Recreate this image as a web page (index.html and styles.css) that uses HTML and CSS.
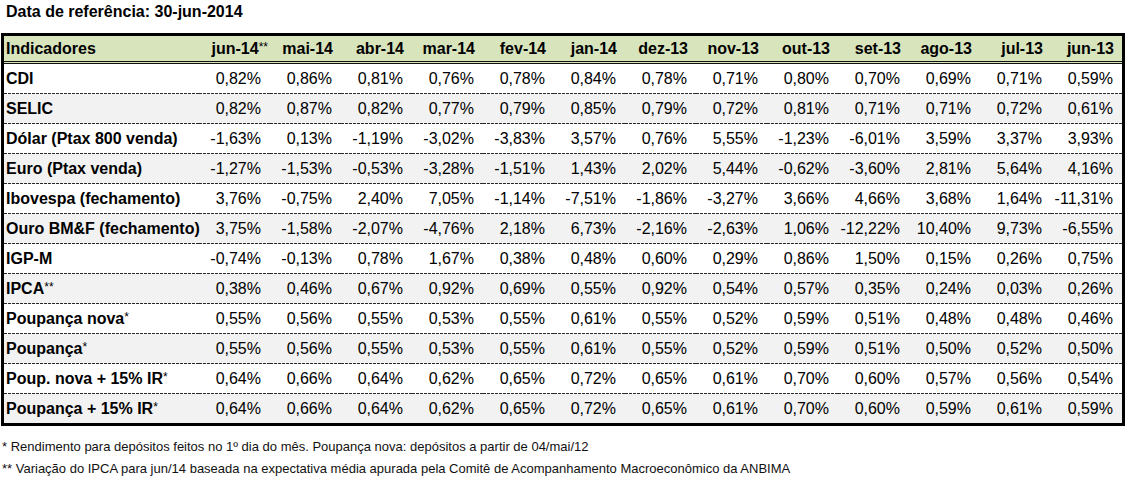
FILE: index.html
```html
<!DOCTYPE html>
<html lang="pt-BR">
<head>
<meta charset="utf-8">
<title>Indicadores</title>
<link rel="stylesheet" href="styles.css">
</head>
<body>
<h1 class="title">Data de referência: 30-jun-2014</h1>
<table class="ind">
  <colgroup>
    <col class="c-label">
    <col class="c-val"><col class="c-val"><col class="c-val"><col class="c-val"><col class="c-val"><col class="c-val"><col class="c-val"><col class="c-val"><col class="c-val"><col class="c-val"><col class="c-val"><col class="c-val"><col class="c-val">
  </colgroup>
  <thead>
    <tr>
      <th class="lbl">Indicadores</th>
      <th>jun-14<span class="ast hang">**</span></th>
      <th>mai-14</th><th>abr-14</th><th>mar-14</th><th>fev-14</th><th>jan-14</th><th>dez-13</th><th>nov-13</th><th>out-13</th><th>set-13</th><th>ago-13</th><th>jul-13</th><th>jun-13</th>
    </tr>
  </thead>
  <tbody>
    <tr><td class="lbl">CDI</td><td>0,82%</td><td>0,86%</td><td>0,81%</td><td>0,76%</td><td>0,78%</td><td>0,84%</td><td>0,78%</td><td>0,71%</td><td>0,80%</td><td>0,70%</td><td>0,69%</td><td>0,71%</td><td>0,59%</td></tr>
    <tr class="alt"><td class="lbl">SELIC</td><td>0,82%</td><td>0,87%</td><td>0,82%</td><td>0,77%</td><td>0,79%</td><td>0,85%</td><td>0,79%</td><td>0,72%</td><td>0,81%</td><td>0,71%</td><td>0,71%</td><td>0,72%</td><td>0,61%</td></tr>
    <tr><td class="lbl">Dólar (Ptax 800 venda)</td><td>-1,63%</td><td>0,13%</td><td>-1,19%</td><td>-3,02%</td><td>-3,83%</td><td>3,57%</td><td>0,76%</td><td>5,55%</td><td>-1,23%</td><td>-6,01%</td><td>3,59%</td><td>3,37%</td><td>3,93%</td></tr>
    <tr class="alt"><td class="lbl">Euro (Ptax venda)</td><td>-1,27%</td><td>-1,53%</td><td>-0,53%</td><td>-3,28%</td><td>-1,51%</td><td>1,43%</td><td>2,02%</td><td>5,44%</td><td>-0,62%</td><td>-3,60%</td><td>2,81%</td><td>5,64%</td><td>4,16%</td></tr>
    <tr><td class="lbl">Ibovespa (fechamento)</td><td>3,76%</td><td>-0,75%</td><td>2,40%</td><td>7,05%</td><td>-1,14%</td><td>-7,51%</td><td>-1,86%</td><td>-3,27%</td><td>3,66%</td><td>4,66%</td><td>3,68%</td><td>1,64%</td><td>-11,31%</td></tr>
    <tr class="alt"><td class="lbl">Ouro BM&amp;F (fechamento)</td><td>3,75%</td><td>-1,58%</td><td>-2,07%</td><td>-4,76%</td><td>2,18%</td><td>6,73%</td><td>-2,16%</td><td>-2,63%</td><td>1,06%</td><td>-12,22%</td><td>10,40%</td><td>9,73%</td><td>-6,55%</td></tr>
    <tr><td class="lbl">IGP-M</td><td>-0,74%</td><td>-0,13%</td><td>0,78%</td><td>1,67%</td><td>0,38%</td><td>0,48%</td><td>0,60%</td><td>0,29%</td><td>0,86%</td><td>1,50%</td><td>0,15%</td><td>0,26%</td><td>0,75%</td></tr>
    <tr class="alt"><td class="lbl">IPCA<span class="ast">**</span></td><td>0,38%</td><td>0,46%</td><td>0,67%</td><td>0,92%</td><td>0,69%</td><td>0,55%</td><td>0,92%</td><td>0,54%</td><td>0,57%</td><td>0,35%</td><td>0,24%</td><td>0,03%</td><td>0,26%</td></tr>
    <tr><td class="lbl">Poupança nova<span class="ast">*</span></td><td>0,55%</td><td>0,56%</td><td>0,55%</td><td>0,53%</td><td>0,55%</td><td>0,61%</td><td>0,55%</td><td>0,52%</td><td>0,59%</td><td>0,51%</td><td>0,48%</td><td>0,48%</td><td>0,46%</td></tr>
    <tr class="alt"><td class="lbl">Poupança<span class="ast">*</span></td><td>0,55%</td><td>0,56%</td><td>0,55%</td><td>0,53%</td><td>0,55%</td><td>0,61%</td><td>0,55%</td><td>0,52%</td><td>0,59%</td><td>0,51%</td><td>0,50%</td><td>0,52%</td><td>0,50%</td></tr>
    <tr><td class="lbl">Poup. nova + 15% IR<span class="ast">*</span></td><td>0,64%</td><td>0,66%</td><td>0,64%</td><td>0,62%</td><td>0,65%</td><td>0,72%</td><td>0,65%</td><td>0,61%</td><td>0,70%</td><td>0,60%</td><td>0,57%</td><td>0,56%</td><td>0,54%</td></tr>
    <tr class="alt"><td class="lbl">Poupança + 15% IR<span class="ast">*</span></td><td>0,64%</td><td>0,66%</td><td>0,64%</td><td>0,62%</td><td>0,65%</td><td>0,72%</td><td>0,65%</td><td>0,61%</td><td>0,70%</td><td>0,60%</td><td>0,59%</td><td>0,61%</td><td>0,59%</td></tr>
  </tbody>
</table>
<div class="notes">
  <p>* Rendimento para depósitos feitos no 1º dia do mês. Poupança nova: depósitos a partir de 04/mai/12</p>
  <p>** Variação do IPCA para jun/14 baseada na expectativa média apurada pela Comitê de Acompanhamento Macroeconômico da ANBIMA</p>
</div>
</body>
</html>
```
FILE: styles.css
```css
html, body {
  margin: 0;
  padding: 0;
  background: #fff;
}
body {
  font-family: "Liberation Sans", Arial, sans-serif;
  color: #000;
}
.title {
  margin: 0;
  padding: 2px 0 0 6px;
  font-size: 16px;
  line-height: 20px;
  font-weight: bold;
}
.ind {
  margin: 11px 0 0 1px;
  width: 1124px;
  table-layout: fixed;
  border-collapse: separate;
  border-spacing: 0;
  border: 3px solid #000;
  font-size: 16px;
}
.c-label { width: 195px; }
.c-val { width: 71px; }
.ind th {
  background: #d8e4bc;
  font-weight: bold;
  text-align: right;
  line-height: 25px;
  padding: 0 8px 0 0;
  border-bottom: 3px double #111;
  white-space: nowrap;
}
.ind td {
  text-align: right;
  line-height: 29px;
  padding: 0 9px 0 0;
  border-bottom: 1px solid transparent;
  background-color: #fff;
  background-image: repeating-linear-gradient(90deg, #2a2a2a 0 3px, transparent 3px 4px);
  background-size: 100% 1px;
  background-position: left bottom;
  background-repeat: no-repeat;
  background-origin: border-box;
  background-clip: border-box;
  white-space: nowrap;
}
.ind tbody tr:last-child td {
  border-bottom: 0;
  background-image: none;
}
.ind tr.alt td {
  background-color: #f2f2f2;
}
.ind .lbl {
  text-align: left;
  font-weight: bold;
  padding: 0 0 0 2px;
  overflow: visible;
}
.ast {
  font-size: 12px;
  font-weight: normal;
  vertical-align: 3px;
  line-height: 0;
}
.hang {
  margin-right: -6px;
}
.notes {
  margin-top: 10px;
  padding-left: 2px;
  font-size: 13px;
  line-height: 22px;
  color: #111;
}
.notes p {
  margin: 0;
}
```
